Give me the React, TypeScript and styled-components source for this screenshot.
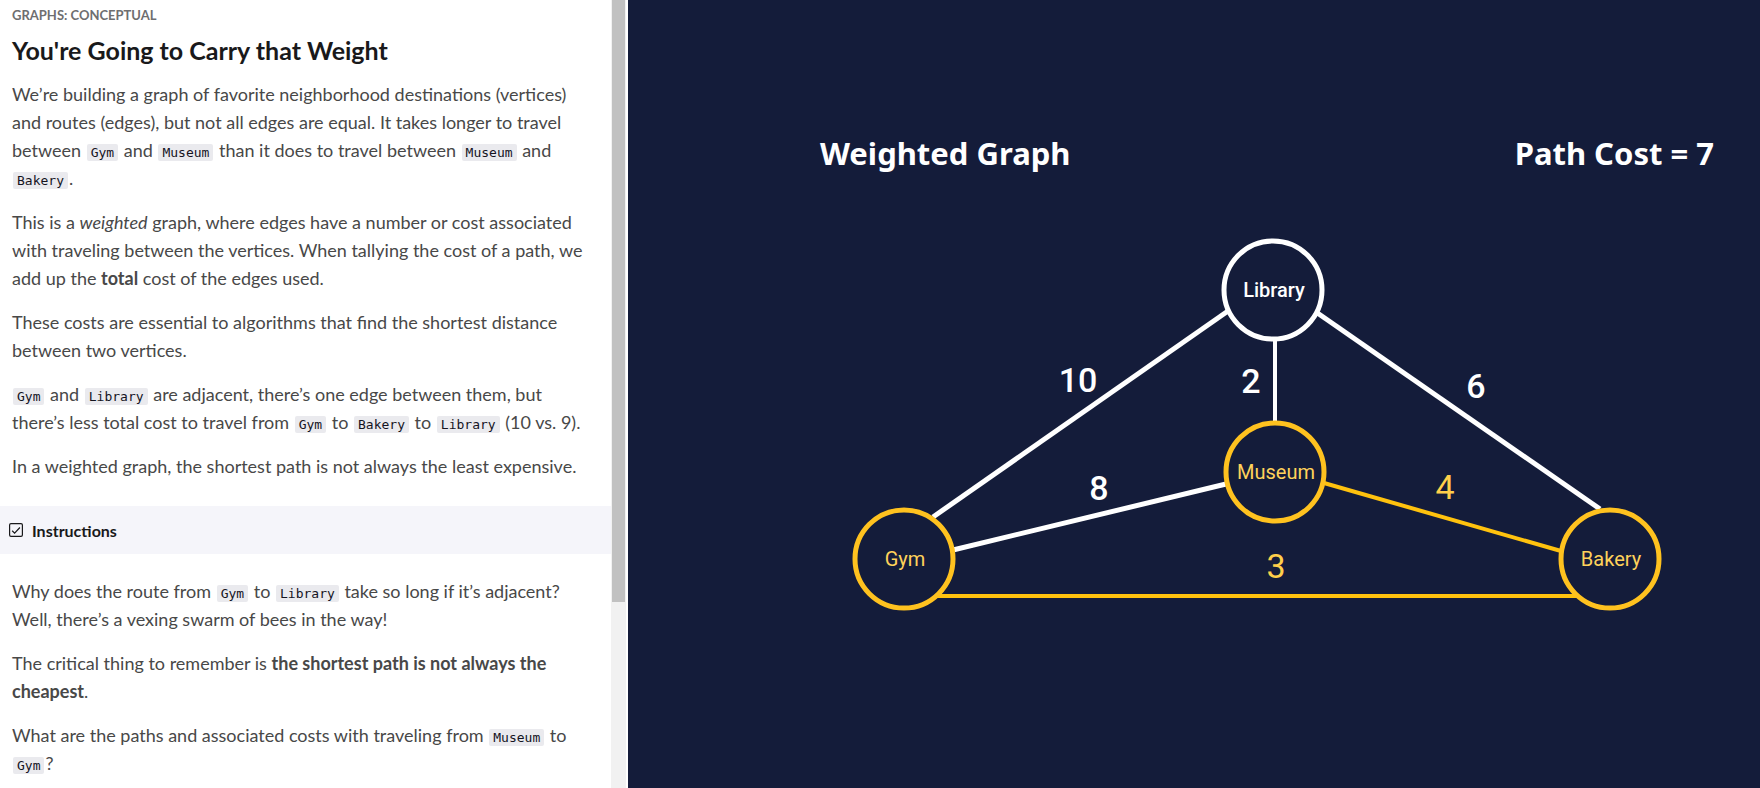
import React from 'react';
import styled, { createGlobalStyle } from 'styled-components';

const GlobalStyle = createGlobalStyle`
  *, *::before, *::after { box-sizing: border-box; }
  body {
    margin: 0;
    background: #fff;
    color: #484848;
    font-family: Lato, 'Open Sans', sans-serif;
  }
`;

const Page = styled.div`
  display: grid;
  grid-template-columns: minmax(0, 157fr) minmax(0, 283fr);
  min-height: 100vh;
`;

const LessonPane = styled.section`
  display: flex;
  padding-right: 2px;
`;

const Lesson = styled.article`
  flex: 1;
  min-width: 0;
`;

const ScrollTrack = styled.div`
  flex: none;
  width: 15px;
  padding: 0 1px;
  background: #f1f1f1;
`;

const ScrollThumb = styled.div`
  height: 76.4%;
  background: #c1c1c1;
`;

const LessonHeader = styled.header`
  padding: 6px 20px 0 12px;
`;

const Eyebrow = styled.p`
  margin: 0;
  font-size: 13px;
  font-weight: 700;
  line-height: 18px;
  color: #6e6e70;
`;

const Title = styled.h1`
  margin: 9px 0 0;
  font-size: 25px;
  font-weight: 700;
  line-height: 34px;
  color: #19191b;
`;

const Prose = styled.div<{ $top: number; $bottom: number }>`
  display: flex;
  flex-direction: column;
  gap: 16px;
  padding: ${(p) => p.$top}px 20px ${(p) => p.$bottom}px 12px;
`;

const Paragraph = styled.p`
  margin: 0;
  font-size: 18px;
  line-height: 28px;
`;

const Code = styled.code`
  margin: 0 1px;
  padding: 1px 4px;
  border-radius: 2px;
  background: #eaeaee;
  color: #15141f;
  font-family: 'DejaVu Sans Mono', monospace;
  font-size: 13px;
  line-height: 17px;
`;

const SectionBar = styled.h2`
  display: flex;
  align-items: center;
  gap: 9px;
  height: 48px;
  margin: 0;
  padding: 0 9px;
  background: #f5f5fa;
  color: #19191b;
  font-size: 16px;
  font-weight: 700;
`;

const DiagramPane = styled.section`
  padding-top: 131px;
  background: #141c3a;
  color: #fff;
  font-family: 'Noto Sans', 'Open Sans', sans-serif;
`;

const DiagramHeader = styled.header`
  display: flex;
  justify-content: space-between;
  padding: 0 46px 0 192px;
`;

const DiagramTitle = styled.h2`
  margin: 0;
  font-size: 31px;
  font-weight: 700;
  line-height: 44px;
`;

const PathCost = styled.p`
  margin: 0;
  font-size: 31px;
  font-weight: 700;
  line-height: 44px;
`;

const Graph = styled.svg`
  display: block;
  width: 100%;
  margin-top: 25px;
`;

const Edge = styled.line<{ $active?: boolean; $width: number }>`
  stroke: ${(p) => (p.$active ? '#ffc20e' : '#fff')};
  stroke-width: ${(p) => p.$width};
`;

const Ring = styled.circle<{ $active?: boolean }>`
  fill: none;
  stroke: ${(p) => (p.$active ? '#ffc21f' : '#fff')};
  stroke-width: 5;
`;

const VertexName = styled.text<{ $active?: boolean }>`
  fill: ${(p) => (p.$active ? '#ffd25a' : '#fff')};
  font-family: Roboto, sans-serif;
  font-size: 20px;
  font-weight: ${(p) => (p.$active ? 400 : 500)};
  text-anchor: middle;
`;

const Weight = styled.text<{ $active?: boolean }>`
  fill: ${(p) => (p.$active ? '#ffcf4a' : '#fff')};
  font-family: Roboto, sans-serif;
  font-size: 34px;
  font-weight: ${(p) => (p.$active ? 400 : 500)};
  text-anchor: middle;
`;

const CheckIcon = () => (
  <svg
    width="14"
    height="14"
    viewBox="0 0 14 14"
    fill="none"
    stroke="#19191b"
    strokeWidth="1.2"
    aria-hidden="true"
  >
    <rect x="0.6" y="0.6" width="12.8" height="12.8" rx="1.4" />
    <path d="M3.2 7.8 5.6 10.1 10.9 4.5" />
  </svg>
);

const vertices = [
  { name: 'Library', x: 645, y: 90, active: false },
  { name: 'Museum', x: 647, y: 272, active: true },
  { name: 'Gym', x: 276, y: 359, active: true },
  { name: 'Bakery', x: 982, y: 359, active: true },
];

const edges = [
  { weight: 10, x1: 305, y1: 317, x2: 600, y2: 111, lx: 450, ly: 192, width: 5, active: false },
  { weight: 2, x1: 647, y1: 140, x2: 647, y2: 222, lx: 623, ly: 193, width: 4, active: false },
  { weight: 6, x1: 688, y1: 112, x2: 972, y2: 309, lx: 848, ly: 198, width: 5, active: false },
  { weight: 8, x1: 325, y1: 350, x2: 598, y2: 284, lx: 471, ly: 300, width: 5, active: false },
  { weight: 4, x1: 696, y1: 283, x2: 933, y2: 351, lx: 817, ly: 299, width: 4, active: true },
  { weight: 3, x1: 308, y1: 396, x2: 950, y2: 396, lx: 648, ly: 378, width: 4, active: true },
];

export default function App() {
  return (
    <>
      <GlobalStyle />
      <Page>
        <LessonPane>
          <Lesson>
            <LessonHeader>
              <Eyebrow>GRAPHS: CONCEPTUAL</Eyebrow>
              <Title>You're Going to Carry that Weight</Title>
            </LessonHeader>
            <Prose $top={13} $bottom={26}>
              <Paragraph>
                We’re building a graph of favorite neighborhood destinations (vertices) and routes
                (edges), but not all edges are equal. It takes longer to travel between{' '}
                <Code>Gym</Code> and <Code>Museum</Code> than it does to travel between{' '}
                <Code>Museum</Code> and <Code>Bakery</Code>.
              </Paragraph>
              <Paragraph>
                This is a <em>weighted</em> graph, where edges have a number or cost associated with
                traveling between the vertices. When tallying the cost of a path, we add up the{' '}
                <strong>total</strong> cost of the edges used.
              </Paragraph>
              <Paragraph>
                These costs are essential to algorithms that find the shortest distance between two
                vertices.
              </Paragraph>
              <Paragraph>
                <Code>Gym</Code> and <Code>Library</Code> are adjacent, there’s one edge between
                them, but there’s less total cost to travel from <Code>Gym</Code> to{' '}
                <Code>Bakery</Code> to <Code>Library</Code> (10 vs. 9).
              </Paragraph>
              <Paragraph>
                In a weighted graph, the shortest path is not always the least expensive.
              </Paragraph>
            </Prose>
            <SectionBar>
              <CheckIcon />
              Instructions
            </SectionBar>
            <Prose $top={23} $bottom={8}>
              <Paragraph>
                Why does the route from <Code>Gym</Code> to <Code>Library</Code> take so long if
                it’s adjacent? Well, there’s a vexing swarm of bees in the way!
              </Paragraph>
              <Paragraph>
                The critical thing to remember is{' '}
                <strong>the shortest path is not always the cheapest</strong>.
              </Paragraph>
              <Paragraph>
                What are the paths and associated costs with traveling from <Code>Museum</Code> to{' '}
                <Code>Gym</Code>?
              </Paragraph>
            </Prose>
          </Lesson>
          <ScrollTrack>
            <ScrollThumb />
          </ScrollTrack>
        </LessonPane>
        <DiagramPane>
          <DiagramHeader>
            <DiagramTitle>Weighted Graph</DiagramTitle>
            <PathCost>Path Cost = 7</PathCost>
          </DiagramHeader>
          <Graph viewBox="0 0 1132 440" role="img" aria-label="Weighted graph of neighborhood routes">
            {edges.map((e) => (
              <g key={e.weight}>
                <Edge x1={e.x1} y1={e.y1} x2={e.x2} y2={e.y2} $width={e.width} $active={e.active} />
                <Weight x={e.lx} y={e.ly} $active={e.active}>{e.weight}</Weight>
              </g>
            ))}
            {vertices.map((v) => (
              <g key={v.name}>
                <Ring cx={v.x} cy={v.y} r={49} $active={v.active} />
                <VertexName x={v.x + 1} y={v.y + 7} $active={v.active}>{v.name}</VertexName>
              </g>
            ))}
          </Graph>
        </DiagramPane>
      </Page>
    </>
  );
}
